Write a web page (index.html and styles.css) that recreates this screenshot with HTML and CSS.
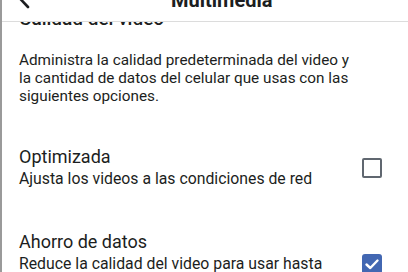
FILE: index.html
```html
<!DOCTYPE html>
<html lang="es">
<head>
<meta charset="utf-8">
<link rel="stylesheet" href="styles.css">
</head>
<body>
<div class="page">
  <header class="header">
    <svg class="back" width="16" height="24" viewBox="0 0 16 24"><path d="M12 2 L3 11.5 L12 21" fill="none" stroke="#1c1e21" stroke-width="2.6" stroke-linecap="round" stroke-linejoin="round"/></svg>
    <h1 class="title">Multimedia</h1>
  </header>
  <main class="content">
    <h2 class="section-title">Calidad del video</h2>
    <p class="intro">Administra la calidad predeterminada del video y la cantidad de datos del celular que usas con las siguientes opciones.</p>
    <div class="option">
      <div class="option-text">
        <div class="option-title">Optimizada</div>
        <div class="option-desc">Ajusta los videos a las condiciones de red</div>
      </div>
      <span class="checkbox"></span>
    </div>
    <div class="option">
      <div class="option-text">
        <div class="option-title">Ahorro de datos</div>
        <div class="option-desc">Reduce la calidad del video para usar hasta menos datos del celular.</div>
      </div>
      <span class="checkbox checked"><svg width="20" height="20" viewBox="0 0 20 20"><path d="M4.5 10.5 L8.3 14 L15.5 6.5" fill="none" stroke="#fff" stroke-width="2.4" stroke-linecap="round" stroke-linejoin="round"/></svg></span>
    </div>
  </main>
</div>
</body>
</html>
```
FILE: styles.css
```css
html, body {
  margin: 0;
  padding: 0;
  background: #fff;
}
body {
  font-family: Roboto, "Liberation Sans", sans-serif;
  color: #1c1e21;
}
.page {
  position: relative;
  height: 272px;
  overflow: hidden;
  border-left: 2px solid #9a9a9a;
  box-sizing: border-box;
}
.header {
  position: absolute;
  top: -30px;
  left: 0;
  right: 0;
  height: 51px;
  background: #fff;
  border-bottom: 1px solid #dcdcdc;
  display: flex;
  align-items: center;
  z-index: 2;
}
.back {
  position: absolute;
  left: 14px;
  top: 16px;
}
.title {
  margin: 0 0 0 169px;
  font-size: 20px;
  font-weight: 700;
  line-height: 24px;
  padding-top: 8px;
}
.content {
  padding: 9px 26px 0 17px;
}
.section-title {
  margin: 0;
  font-size: 19px;
  font-weight: 500;
  line-height: 20px;
}
.intro {
  margin: 22px 0 0;
  font-size: 15.3px;
  line-height: 18px;
  max-width: 338px;
}
.option {
  display: flex;
  align-items: center;
  gap: 24px;
  margin-top: 41px;
}
.option-text {
  flex: 1;
}
.option-title {
  font-size: 18px;
  line-height: 22px;
}
.option-desc {
  font-size: 15.8px;
  line-height: 22px;
}
.checkbox {
  width: 20px;
  height: 20px;
  box-sizing: border-box;
  border: 2.5px solid #606770;
  border-radius: 2px;
  flex: none;
}
.checkbox.checked {
  border: none;
  background: #4267b2;
  border-radius: 3px;
  display: flex;
}
```
